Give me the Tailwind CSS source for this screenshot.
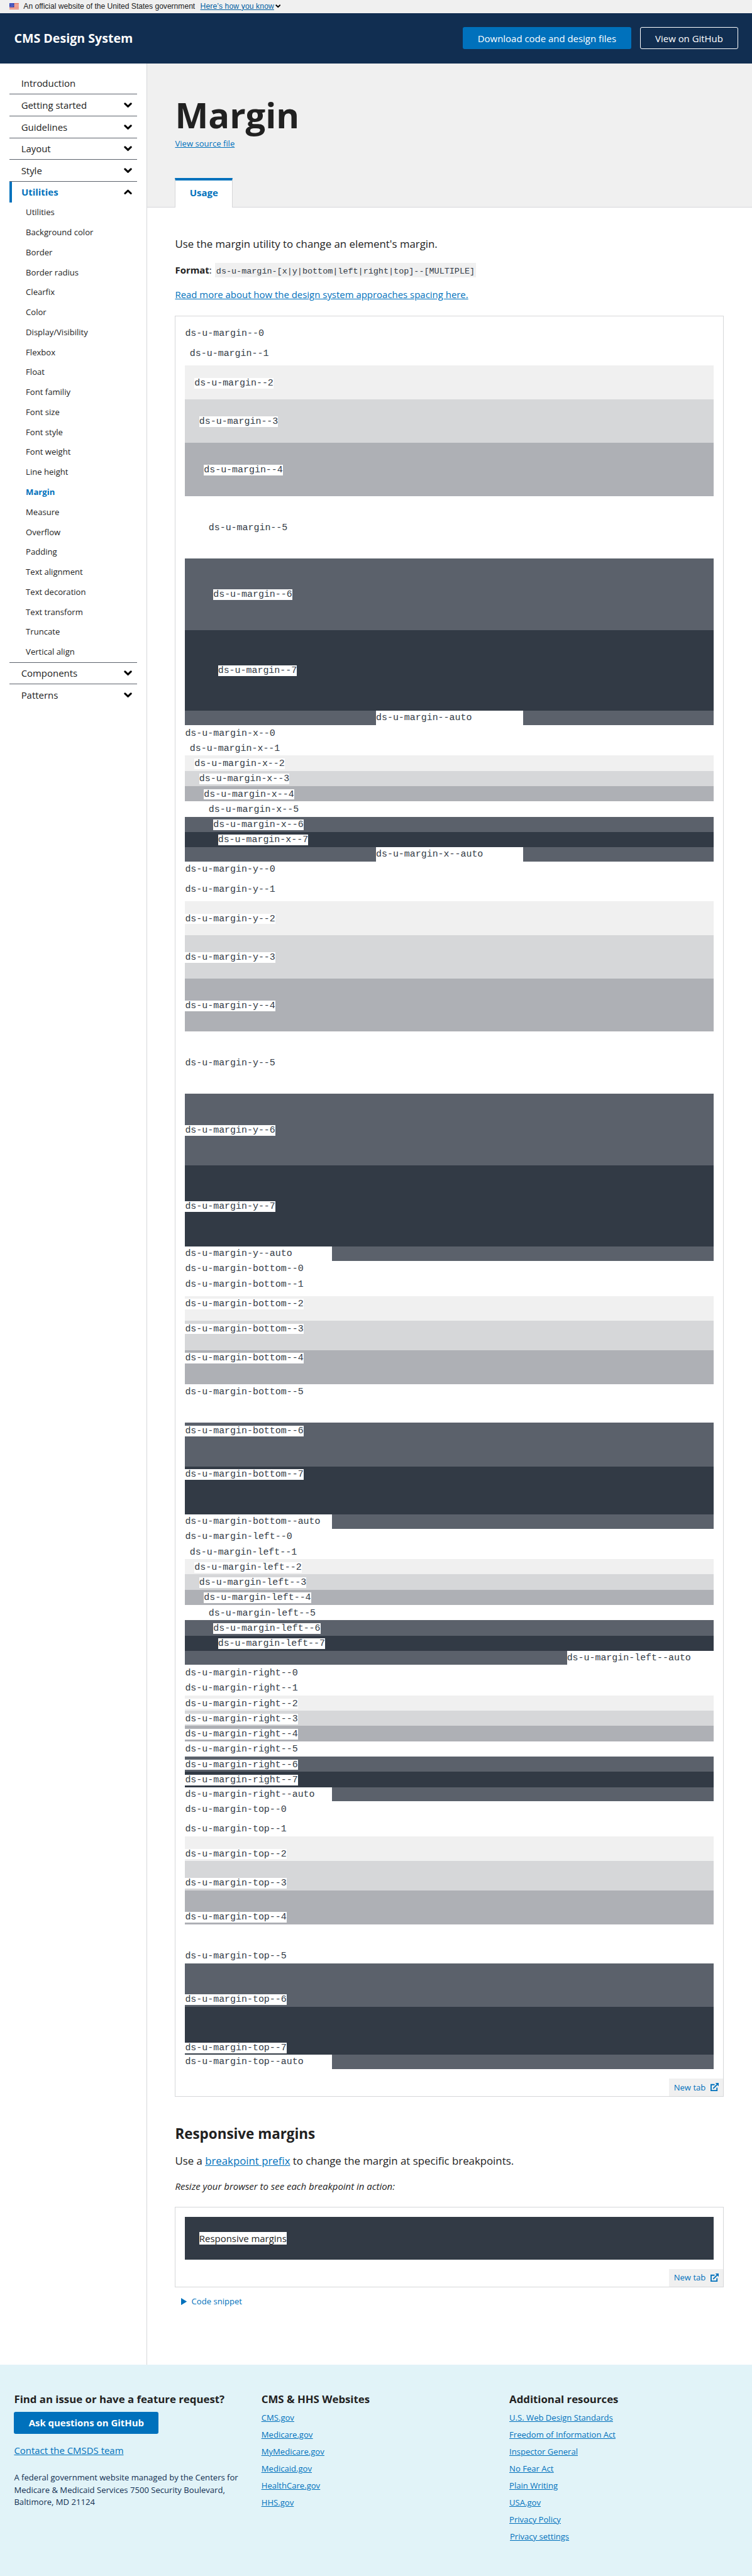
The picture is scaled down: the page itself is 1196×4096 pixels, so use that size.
<!DOCTYPE html>
<html lang="en" class="text-[14.95px]">
<head>
<meta charset="utf-8">
<title>Margin - CMS Design System</title>
<script src="https://cdn.jsdelivr.net/npm/@tailwindcss/browser@4"></script>
</head>
<body class="bg-white font-['Open_Sans',sans-serif] text-base leading-6 text-[#212121]">
<svg class="hidden">
  <symbol id="chev" viewBox="0 0 14 9"><path fill="none" stroke="#000" stroke-width="3.2" stroke-linecap="round" d="M2 2 7 6.8 12 2"/></symbol>
  <symbol id="ext" viewBox="0 0 14 14"><path fill="none" stroke="#0071bc" stroke-width="2" d="M7 3H1v10h10V8"/><path fill="none" stroke="#0071bc" stroke-width="2" d="M4.5 9.5 11.5 2.5"/><path fill="#0071bc" d="M8.2 0H14v5.8z"/></symbol>
</svg>

<div class="flex h-5.5 items-center bg-[#f0f0f0] pl-4 font-['Liberation_Sans',sans-serif] text-[0.8125rem] leading-4">
  <svg class="mr-2 h-2.75 w-4" viewBox="0 0 16 11"><path fill="#fff" d="M0 0h16v11H0z"/><path stroke="#db3e1f" d="M0 .5h16M0 2.5h16M0 4.5h16M0 6.5h16M0 8.5h16M0 10.5h16"/><path fill="#1e33b1" d="M0 0h8v7H0z"/><path stroke="#fff" stroke-width=".8" stroke-dasharray="1 1" d="M1 1.5h6M2 3.5h5M1 5.5h6"/></svg>
  <span class="w-75.25 whitespace-nowrap tracking-[-0.002em]">An official website of the United States government</span>
  <a class="w-31.5 whitespace-nowrap text-[#005ea2] underline tracking-[0.01em]">Here’s how you know</a>
  <svg class="ml-0.5 h-1.5 w-2.25" viewBox="0 0 14 9"><use href="#chev"/></svg>
</div>

<header class="flex h-21.5 items-center bg-[#112e51] px-6 text-white">
  <div class="mr-auto text-[1.3125rem] font-bold">CMS Design System</div>
  <a class="flex h-9.5 w-71.5 items-center justify-center rounded-[3px] bg-[#0071bc]">Download code and design files</a>
  <a class="ml-4 flex h-9.5 w-41.5 items-center justify-center rounded-[3px] border border-white">View on GitHub</a>
</header>

<div class="flex h-979">
  <nav class="w-62.5 shrink-0 border-r border-[#d6d7d9] pt-4 pl-4">
    <div class="w-54.25 [&_svg]:h-2.25 [&_svg]:w-3.5">
      <div class="[&>a]:flex [&>a]:h-9.25 [&>a]:items-center [&>a]:justify-between [&>a]:border-b [&>a]:border-[#5b616b] [&>a]:pr-2 [&>a]:pl-5">
        <a>Introduction</a>
        <a>Getting started<svg><use href="#chev"/></svg></a>
        <a>Guidelines<svg><use href="#chev"/></svg></a>
        <a>Layout<svg><use href="#chev"/></svg></a>
        <a>Style<svg><use href="#chev"/></svg></a>
      </div>
      <a class="flex h-9 items-center justify-between border-l-4 border-[#0071bc] pr-2 pl-4 font-bold text-[#0071bc]">Utilities<svg class="rotate-180"><use href="#chev"/></svg></a>
      <div class="pl-7 text-[0.875rem] [&>a]:block [&>a]:h-8.5 [&>a]:leading-8.5">
        <a>Utilities</a>
        <a>Background color</a>
        <a>Border</a>
        <a>Border radius</a>
        <a>Clearfix</a>
        <a>Color</a>
        <a>Display/Visibility</a>
        <a>Flexbox</a>
        <a>Float</a>
        <a>Font familiy</a>
        <a>Font size</a>
        <a>Font style</a>
        <a>Font weight</a>
        <a>Line height</a>
        <a class="font-bold text-[#0071bc]">Margin</a>
        <a>Measure</a>
        <a>Overflow</a>
        <a>Padding</a>
        <a>Text alignment</a>
        <a>Text decoration</a>
        <a>Text transform</a>
        <a>Truncate</a>
        <a>Vertical align</a>
      </div>
      <div class="[&>a]:flex [&>a]:h-9.25 [&>a]:items-center [&>a]:justify-between [&>a]:border-t [&>a]:border-[#5b616b] [&>a]:pr-2 [&>a]:pl-5">
        <a>Components<svg><use href="#chev"/></svg></a>
        <a>Patterns<svg><use href="#chev"/></svg></a>
      </div>
    </div>
  </nav>

  <main class="min-w-0 grow">
    <div class="h-61.25 border-b border-[#d6d7d9] bg-[#f0f0f0] px-12 pt-12.75">
      <h1 class="text-[3.75rem] leading-18 font-bold">Margin</h1>
      <a class="mt-0.75 block text-[0.875rem] leading-5.25 text-[#0071bc] underline">View source file</a>
      <div class="mt-12 h-12.5 w-24.5 border-x border-t-4 border-x-[#d6d7d9] border-t-[#0071bc] bg-white pt-2 text-center font-bold text-[#0071bc]">Usage</div>
    </div>

    <div class="px-12">
      <p class="mt-12 text-[1.125rem] leading-6.75">Use the margin utility to change an element's margin.</p>
      <div class="mt-4.75 flex h-6.25"><span class="w-17"><b>Format</b>:</span><code class="bg-[#f0f0f0] px-0.5 font-['Liberation_Mono',monospace] text-[0.9rem] leading-7.25 text-[#323a45]">ds-u-margin-[x|y|bottom|left|right|top]--[MULTIPLE]</code></div>
      <a class="mt-4.25 block text-[#0071bc] underline">Read more about how the design system approaches spacing here.</a>

      <section class="mt-6 border border-[#d6d7d9] pt-4">
        <div class="mx-4 font-['Liberation_Mono',monospace] text-base text-[#323a45] [&>div]:flex [&>div]:pt-1.25 [&>div]:pb-0.75 [&_span]:h-4.5 [&_span]:bg-white [&_span]:leading-4.75 [&>p]:bg-[#5b616b] [&_b]:block [&_b]:h-6 [&_b]:w-62.5 [&_b]:bg-white [&_b]:font-normal [&_b]:leading-6">
          <div><span>ds-u-margin--0</span></div>
          <div><span class="m-2">ds-u-margin--1</span></div>
          <div class="bg-[#f0f0f0]"><span class="m-4">ds-u-margin--2</span></div>
          <div class="bg-[#d6d7d9]"><span class="m-6">ds-u-margin--3</span></div>
          <div class="bg-[#aeb0b5]"><span class="m-8">ds-u-margin--4</span></div>
          <div><span class="m-10">ds-u-margin--5</span></div>
          <div class="bg-[#5b616b]"><span class="m-12">ds-u-margin--6</span></div>
          <div class="bg-[#323a45]"><span class="m-14">ds-u-margin--7</span></div>
          <p><b class="mx-auto">ds-u-margin--auto</b></p>

          <div><span>ds-u-margin-x--0</span></div>
          <div><span class="mx-2">ds-u-margin-x--1</span></div>
          <div class="bg-[#f0f0f0]"><span class="mx-4">ds-u-margin-x--2</span></div>
          <div class="bg-[#d6d7d9]"><span class="mx-6">ds-u-margin-x--3</span></div>
          <div class="bg-[#aeb0b5]"><span class="mx-8">ds-u-margin-x--4</span></div>
          <div><span class="mx-10">ds-u-margin-x--5</span></div>
          <div class="bg-[#5b616b]"><span class="mx-12">ds-u-margin-x--6</span></div>
          <div class="bg-[#323a45]"><span class="mx-14">ds-u-margin-x--7</span></div>
          <p><b class="mx-auto">ds-u-margin-x--auto</b></p>

          <div><span>ds-u-margin-y--0</span></div>
          <div><span class="my-2">ds-u-margin-y--1</span></div>
          <div class="bg-[#f0f0f0]"><span class="my-4">ds-u-margin-y--2</span></div>
          <div class="bg-[#d6d7d9]"><span class="my-6">ds-u-margin-y--3</span></div>
          <div class="bg-[#aeb0b5]"><span class="my-8">ds-u-margin-y--4</span></div>
          <div><span class="my-10">ds-u-margin-y--5</span></div>
          <div class="bg-[#5b616b]"><span class="my-12">ds-u-margin-y--6</span></div>
          <div class="bg-[#323a45]"><span class="my-14">ds-u-margin-y--7</span></div>
          <p><b>ds-u-margin-y--auto</b></p>

          <div><span>ds-u-margin-bottom--0</span></div>
          <div><span class="mb-2">ds-u-margin-bottom--1</span></div>
          <div class="bg-[#f0f0f0]"><span class="mb-4">ds-u-margin-bottom--2</span></div>
          <div class="bg-[#d6d7d9]"><span class="mb-6">ds-u-margin-bottom--3</span></div>
          <div class="bg-[#aeb0b5]"><span class="mb-8">ds-u-margin-bottom--4</span></div>
          <div><span class="mb-10">ds-u-margin-bottom--5</span></div>
          <div class="bg-[#5b616b]"><span class="mb-12">ds-u-margin-bottom--6</span></div>
          <div class="bg-[#323a45]"><span class="mb-14">ds-u-margin-bottom--7</span></div>
          <p><b>ds-u-margin-bottom--auto</b></p>

          <div><span>ds-u-margin-left--0</span></div>
          <div><span class="ml-2">ds-u-margin-left--1</span></div>
          <div class="bg-[#f0f0f0]"><span class="ml-4">ds-u-margin-left--2</span></div>
          <div class="bg-[#d6d7d9]"><span class="ml-6">ds-u-margin-left--3</span></div>
          <div class="bg-[#aeb0b5]"><span class="ml-8">ds-u-margin-left--4</span></div>
          <div><span class="ml-10">ds-u-margin-left--5</span></div>
          <div class="bg-[#5b616b]"><span class="ml-12">ds-u-margin-left--6</span></div>
          <div class="bg-[#323a45]"><span class="ml-14">ds-u-margin-left--7</span></div>
          <p><b class="ml-auto">ds-u-margin-left--auto</b></p>

          <div><span>ds-u-margin-right--0</span></div>
          <div><span class="mr-2">ds-u-margin-right--1</span></div>
          <div class="bg-[#f0f0f0]"><span class="mr-4">ds-u-margin-right--2</span></div>
          <div class="bg-[#d6d7d9]"><span class="mr-6">ds-u-margin-right--3</span></div>
          <div class="bg-[#aeb0b5]"><span class="mr-8">ds-u-margin-right--4</span></div>
          <div><span class="mr-10">ds-u-margin-right--5</span></div>
          <div class="bg-[#5b616b]"><span class="mr-12">ds-u-margin-right--6</span></div>
          <div class="bg-[#323a45]"><span class="mr-14">ds-u-margin-right--7</span></div>
          <p><b class="mr-auto">ds-u-margin-right--auto</b></p>

          <div><span>ds-u-margin-top--0</span></div>
          <div><span class="mt-2">ds-u-margin-top--1</span></div>
          <div class="bg-[#f0f0f0]"><span class="mt-4">ds-u-margin-top--2</span></div>
          <div class="bg-[#d6d7d9]"><span class="mt-6">ds-u-margin-top--3</span></div>
          <div class="bg-[#aeb0b5]"><span class="mt-8">ds-u-margin-top--4</span></div>
          <div><span class="mt-10">ds-u-margin-top--5</span></div>
          <div class="bg-[#5b616b]"><span class="mt-12">ds-u-margin-top--6</span></div>
          <div class="bg-[#323a45]"><span class="mt-14">ds-u-margin-top--7</span></div>
          <p><b>ds-u-margin-top--auto</b></p>
        </div>
        <a class="mt-4 ml-auto flex h-7.5 w-23 items-center justify-between bg-[#f0f0f0] px-2 text-[0.875rem] text-[#0071bc]">New tab<svg class="h-3.5 w-3.5"><use href="#ext"/></svg></a>
      </section>

      <h2 class="mt-12 text-[1.5rem] leading-7.75 font-bold">Responsive margins</h2>
      <p class="mt-4 text-[1.125rem] leading-6.75">Use a <a class="text-[#0071bc] underline">breakpoint prefix</a> to change the margin at specific breakpoints.</p>
      <p class="mt-4.5 italic">Resize your browser to see each breakpoint in action:</p>

      <section class="mt-6 border border-[#d6d7d9] pt-4">
        <div class="mx-4 flex h-18 items-center bg-[#323a45] px-6"><span class="h-5.5 bg-white leading-5.5">Responsive margins</span></div>
        <a class="mt-4 ml-auto flex h-7.5 w-23 items-center justify-between bg-[#f0f0f0] px-2 text-[0.875rem] text-[#0071bc]">New tab<svg class="h-3.5 w-3.5"><use href="#ext"/></svg></a>
      </section>
      <a class="mt-3.5 flex items-center gap-2 pl-2.5 text-[0.875rem] leading-5.25 text-[#0071bc]"><svg class="h-3 w-2.5" viewBox="0 0 10 12"><path fill="#0071bc" d="M0 0 10 6 0 12z"/></svg>Code snippet</a>
    </div>
  </main>
</div>

<footer class="flex h-90 bg-[#e1f3f8] pt-11.75 pl-6">
  <div class="w-105.25">
    <h2 class="text-[1.125rem] leading-5.75 font-bold">Find an issue or have a feature request?</h2>
    <a class="mt-2.5 flex h-9.5 w-61.5 items-center justify-center rounded-[3px] bg-[#0071bc] font-bold text-white">Ask questions on GitHub</a>
    <a class="mt-4 block text-[#0071bc] underline">Contact the CMSDS team</a>
    <p class="mt-6 text-[0.875rem] leading-5.25 text-[#112e51]">A federal government website managed by the Centers for<br>Medicare &amp; Medicaid Services 7500 Security Boulevard,<br>Baltimore, MD 21124</p>
  </div>
  <div class="w-105.5">
    <h2 class="text-[1.125rem] leading-5.75 font-bold">CMS &amp; HHS Websites</h2>
    <div class="mt-2.5 flex flex-col items-start gap-2 text-[0.875rem] leading-5.25 text-[#0071bc] underline">
      <a>CMS.gov</a>
      <a>Medicare.gov</a>
      <a>MyMedicare.gov</a>
      <a>Medicaid.gov</a>
      <a>HealthCare.gov</a>
      <a>HHS.gov</a>
    </div>
  </div>
  <div>
    <h2 class="text-[1.125rem] leading-5.75 font-bold">Additional resources</h2>
    <div class="mt-2.5 flex flex-col items-start gap-2 text-[0.875rem] leading-5.25 text-[#0071bc] underline">
      <a>U.S. Web Design Standards</a>
      <a>Freedom of Information Act</a>
      <a>Inspector General</a>
      <a>No Fear Act</a>
      <a>Plain Writing</a>
      <a>USA.gov</a>
      <a>Privacy Policy</a>
      <a class="ml-0.25">Privacy settings</a>
    </div>
  </div>
</footer>
</body>
</html>
